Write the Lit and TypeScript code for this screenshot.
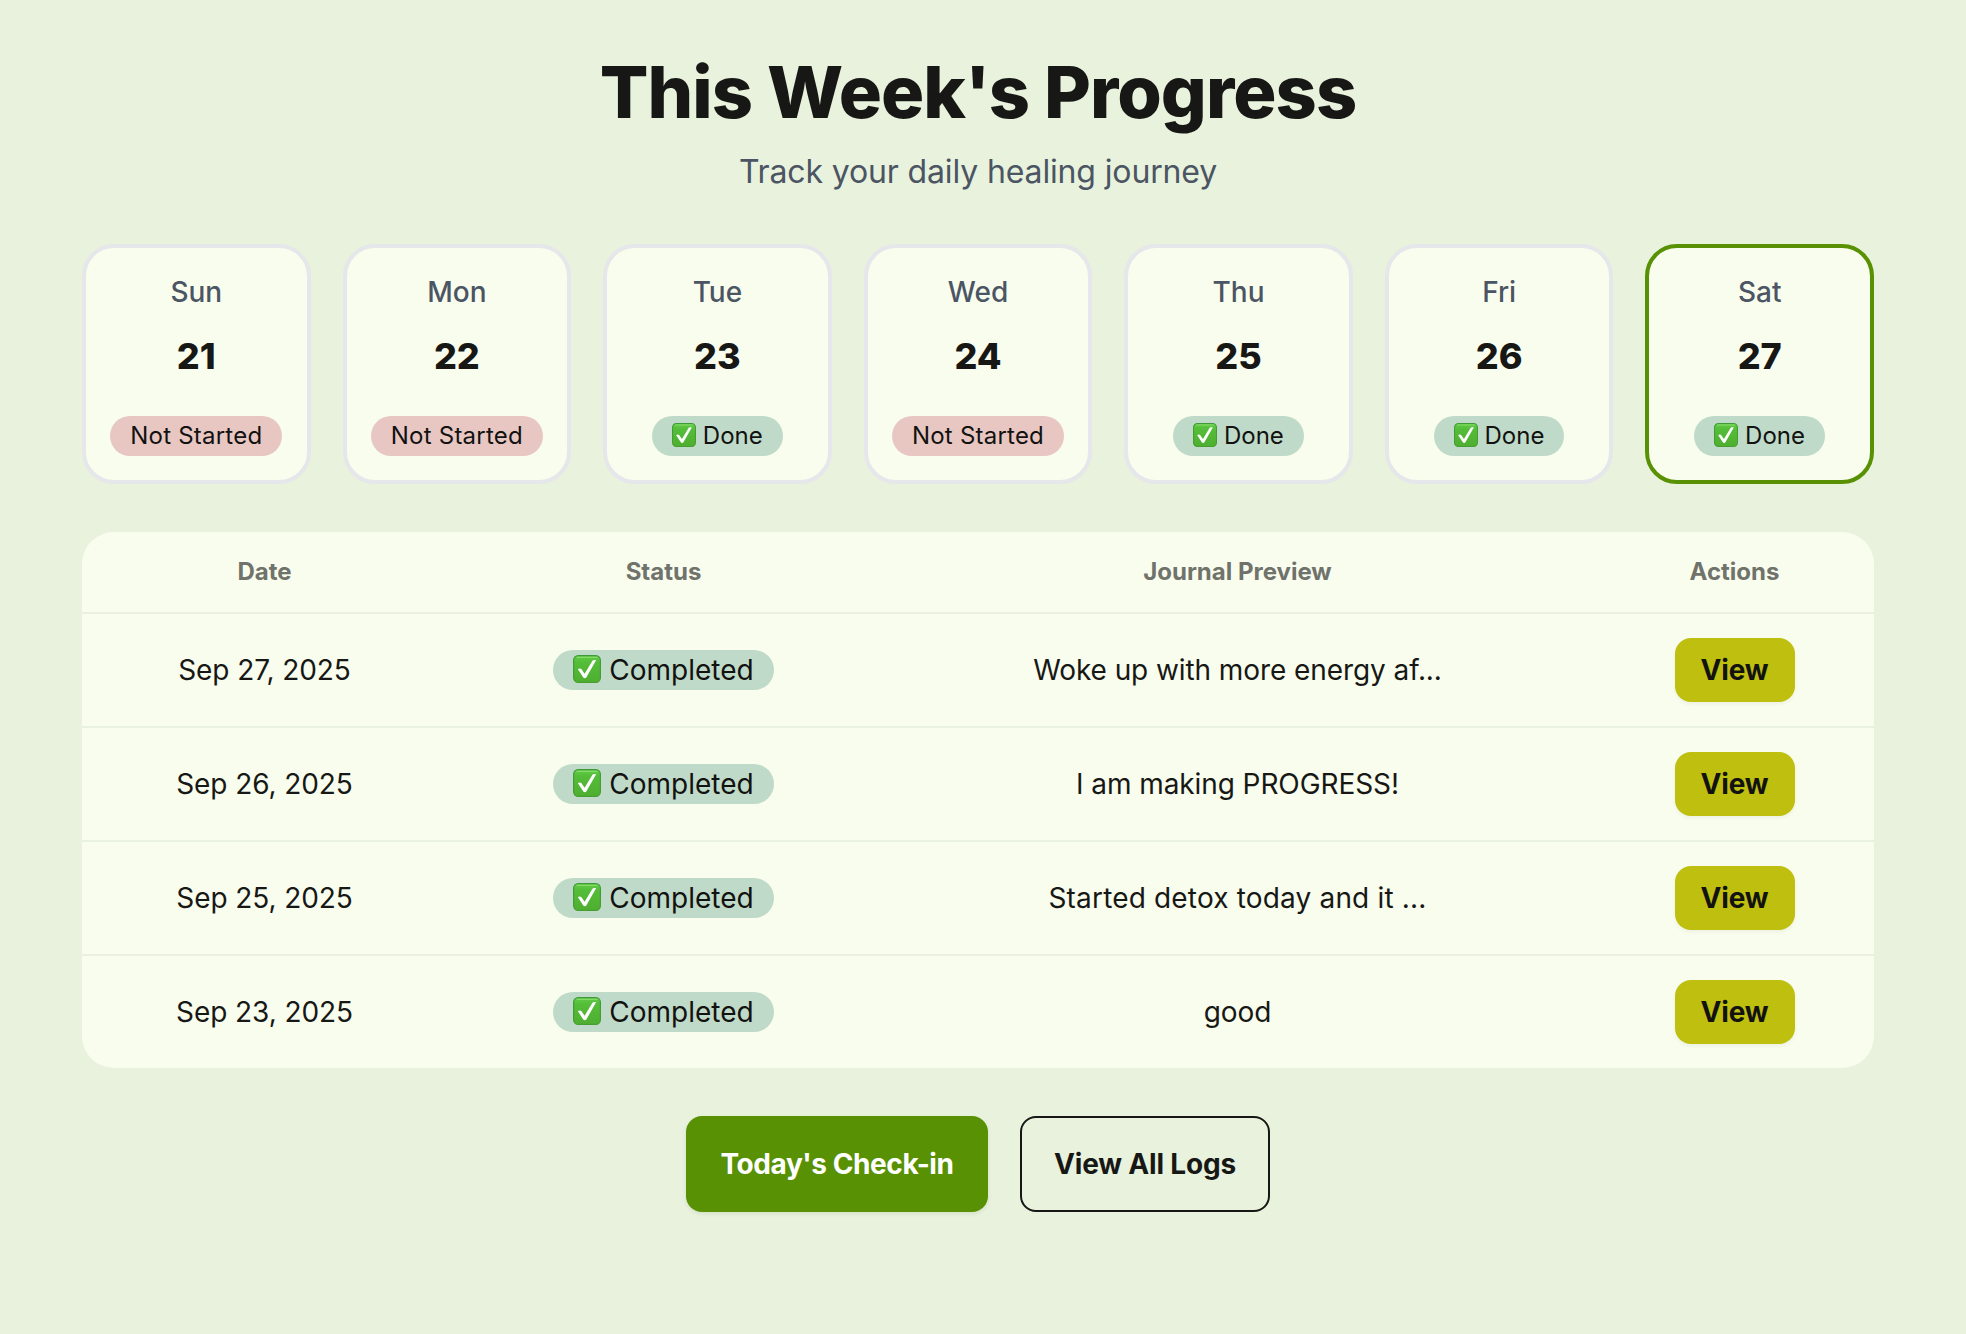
import { LitElement, html, css } from "lit";
import { customElement, property } from "lit/decorators.js";
import { classMap } from "lit/directives/class-map.js";

interface Day {
  name: string;
  date: number;
  done: boolean;
  today?: boolean;
}

interface Entry {
  date: string;
  preview: string;
  wide?: boolean;
}

const DAYS: Day[] = [
  { name: "Sun", date: 21, done: false },
  { name: "Mon", date: 22, done: false },
  { name: "Tue", date: 23, done: true },
  { name: "Wed", date: 24, done: false },
  { name: "Thu", date: 25, done: true },
  { name: "Fri", date: 26, done: true },
  { name: "Sat", date: 27, done: true, today: true },
];

const ENTRIES: Entry[] = [
  { date: "Sep 27, 2025", preview: "Woke up with more energy af..." },
  { date: "Sep 26, 2025", preview: "I am making PROGRESS!" },
  { date: "Sep 25, 2025", preview: "Started detox today and it ...", wide: true },
  { date: "Sep 23, 2025", preview: "good" },
];

@customElement("check-mark")
export class CheckMark extends LitElement {
  static styles = css`
    :host {
      display: block;
      width: 1em;
      height: 1em;
      flex: none;
    }
    svg {
      display: block;
      width: 100%;
      height: 100%;
    }
  `;

  render() {
    return html`
      <svg viewBox="0 0 28 28" aria-hidden="true">
        <defs>
          <linearGradient id="face" x1="0" y1="0" x2="0" y2="1">
            <stop offset="0" stop-color="#62cc4a" />
            <stop offset="0.25" stop-color="#54bd38" />
            <stop offset="1" stop-color="#4eae30" />
          </linearGradient>
          <linearGradient id="rim" x1="0" y1="0" x2="0" y2="1">
            <stop offset="0" stop-color="#3f9a3a" />
            <stop offset="1" stop-color="#479f2f" />
          </linearGradient>
        </defs>
        <rect x="0.6" y="0.6" width="26.8" height="26.8" rx="4.6" fill="url(#face)" stroke="url(#rim)" stroke-width="1.2" />
        <path d="M4 2.3H24" stroke="#8fe06f" stroke-width="1.2" stroke-linecap="round" opacity="0.8" />
        <path
          d="M4.9 14.2C6 13.1 7.8 13.1 8.5 14.3L11.6 18.8L19 6.4C19.8 5.2 21.4 4.9 23.1 5.2L13.3 22.6C12.7 23.6 11 23.6 10.3 22.6Z"
          fill="#fff"
        />
      </svg>
    `;
  }
}

@customElement("status-pill")
export class StatusPill extends LitElement {
  @property({ type: Boolean }) done = false;
  @property() label = "";

  static styles = css`
    :host {
      display: inline-flex;
    }
    .pill {
      box-sizing: border-box;
      display: inline-flex;
      align-items: center;
      gap: 0.28em;
      height: 40px;
      padding: 0 20px;
      border-radius: 20px;
      background: #e8c7c3;
      color: #121210;
      letter-spacing: 0.22px;
      white-space: nowrap;
    }
    .done {
      background: #c0dac9;
      letter-spacing: 0;
    }
    check-mark {
      margin-top: -2px;
    }
  `;

  render() {
    return html`
      <span class=${classMap({ pill: true, done: this.done })}>
        ${this.done ? html`<check-mark></check-mark>` : null}
        <span>${this.label}</span>
      </span>
    `;
  }
}

@customElement("day-card")
export class DayCard extends LitElement {
  @property({ attribute: false }) day!: Day;

  static styles = css`
    :host {
      display: block;
      min-width: 0;
    }
    .card {
      box-sizing: border-box;
      height: 240px;
      padding: 24px 0;
      border: 4px solid #e5e7eb;
      border-radius: 32px;
      background: #f9fdee;
      display: flex;
      flex-direction: column;
      align-items: center;
    }
    .today {
      border-color: #589103;
    }
    .name {
      font-size: 28px;
      line-height: 40px;
      font-weight: 500;
      color: #4b5563;
    }
    .date {
      margin-top: 16px;
      font-size: 36px;
      line-height: 56px;
      font-weight: 800;
      color: #171815;
    }
    status-pill {
      margin-top: 32px;
      font-size: 24px;
      line-height: 32px;
    }
  `;

  render() {
    const { name, date, done, today } = this.day;
    return html`
      <div class=${classMap({ card: true, today: !!today })}>
        <div class="name">${name}</div>
        <div class="date">${date}</div>
        <status-pill ?done=${done} label=${done ? "Done" : "Not Started"}></status-pill>
      </div>
    `;
  }
}

@customElement("log-table")
export class LogTable extends LitElement {
  @property({ attribute: false }) entries: Entry[] = [];

  static styles = css`
    :host {
      display: block;
    }
    .table {
      border-radius: 32px;
      overflow: hidden;
      background: #f9fdee;
    }
    .row {
      display: grid;
      grid-template-columns: 365px 433px 715px 279px;
      height: 112px;
      align-items: center;
      justify-items: center;
      font-size: 28px;
      line-height: 40px;
      color: #171815;
    }
    .row + .row {
      border-top: 2px solid #e8f2de;
    }
    .head {
      height: 80px;
      font-size: 24px;
      line-height: 32px;
      font-weight: 700;
      color: #70736b;
    }
    .text {
      letter-spacing: -0.08px;
    }
    .wide {
      letter-spacing: 0.17px;
    }
    .view {
      box-sizing: border-box;
      width: 120px;
      height: 64px;
      padding: 0;
      border: 0;
      border-radius: 16px;
      background: #bfbf10;
      color: #121210;
      font: inherit;
      font-weight: 700;
      letter-spacing: -0.2px;
      box-shadow: 0 2px 4px rgba(0, 0, 0, 0.05);
    }
  `;

  render() {
    return html`
      <div class="table">
        <div class="row head">
          <span>Date</span><span>Status</span><span>Journal Preview</span><span>Actions</span>
        </div>
        ${this.entries.map(
          (e) => html`
            <div class="row">
              <span class="text">${e.date}</span>
              <status-pill done label="Completed"></status-pill>
              <span class=${classMap({ text: true, wide: !!e.wide })}>${e.preview}</span>
              <button class="view">View</button>
            </div>
          `
        )}
      </div>
    `;
  }
}

@customElement("app-root")
export class AppRoot extends LitElement {
  static styles = css`
    :host {
      display: block;
      box-sizing: border-box;
      min-height: 1334px;
      padding: 48px 92px 0 82px;
      background: #e8f2dc;
      font-family: Inter, "Liberation Sans", sans-serif;
      color: #171815;
    }
    .title {
      margin: 0;
      font-size: 72px;
      line-height: 88px;
      font-weight: 800;
      letter-spacing: -0.94px;
      text-align: center;
    }
    .subtitle {
      margin: 12px 0 0;
      font-size: 32px;
      line-height: 48px;
      letter-spacing: -0.14px;
      color: #4b5563;
      text-align: center;
    }
    .week {
      display: grid;
      grid-template-columns: repeat(7, minmax(0, 1fr));
      gap: 32px;
      margin-top: 48px;
    }
    log-table {
      margin-top: 48px;
    }
    .actions {
      display: flex;
      justify-content: center;
      gap: 32px;
      margin-top: 48px;
    }
    .button {
      box-sizing: border-box;
      height: 96px;
      border: 0;
      border-radius: 16px;
      font: inherit;
      font-size: 28px;
      font-weight: 700;
      white-space: nowrap;
    }
    .primary {
      width: 302px;
      padding: 0;
      letter-spacing: -0.4px;
      background: #589103;
      color: #fff;
      box-shadow: 0 2px 4px rgba(0, 0, 0, 0.08);
    }
    .outline {
      width: 250px;
      padding: 0;
      letter-spacing: -0.18px;
      border: 2px solid #171815;
      background: transparent;
      color: #171815;
    }
  `;

  render() {
    return html`
      <h1 class="title">This Week's Progress</h1>
      <p class="subtitle">Track your daily healing journey</p>
      <div class="week">${DAYS.map((d) => html`<day-card .day=${d}></day-card>`)}</div>
      <log-table .entries=${ENTRIES}></log-table>
      <div class="actions">
        <button class="button primary">Today's Check-in</button>
        <button class="button outline">View All Logs</button>
      </div>
    `;
  }
}
